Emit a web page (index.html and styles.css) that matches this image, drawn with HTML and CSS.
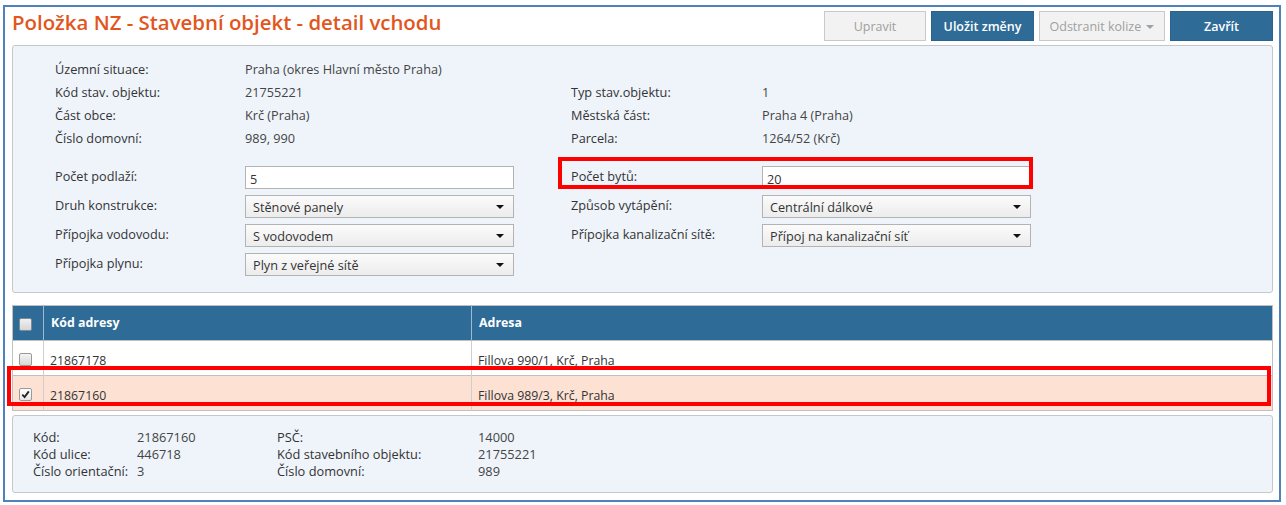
FILE: index.html
```html
<!DOCTYPE html>
<html lang="cs">
<head>
<meta charset="utf-8">
<title>Položka NZ - Stavební objekt - detail vchodu</title>
<link rel="stylesheet" href="styles.css">
</head>
<body>
<div class="frame">
  <div class="topbar">
    <h1 class="title">Položka NZ - Stavební objekt - detail vchodu</h1>
    <div class="actions">
      <button class="btn btn-disabled btn-upravit">Upravit</button>
      <button class="btn btn-primary btn-ulozit">Uložit změny</button>
      <button class="btn btn-disabled btn-kolize">Odstranit kolize <span class="caret"></span></button>
      <button class="btn btn-primary btn-zavrit">Zavřít</button>
    </div>
  </div>

  <div class="panel detail">
    <div class="info">
      <span class="lbl">Územní situace:</span><span class="val">Praha (okres Hlavní město Praha)</span><span></span><span></span>
      <span class="lbl">Kód stav. objektu:</span><span class="val">21755221</span><span class="lbl">Typ stav.objektu:</span><span class="val">1</span>
      <span class="lbl">Část obce:</span><span class="val">Krč (Praha)</span><span class="lbl">Městská část:</span><span class="val">Praha 4 (Praha)</span>
      <span class="lbl">Číslo domovní:</span><span class="val">989, 990</span><span class="lbl">Parcela:</span><span class="val">1264/52 (Krč)</span>
    </div>
    <div class="form">
      <span class="lbl">Počet podlaží:</span><div class="field"><div class="input">5</div></div>
      <span class="lbl">Počet bytů:</span><div class="field"><div class="input">20</div></div>
      <span class="lbl">Druh konstrukce:</span><div class="field"><div class="select">Stěnové panely<span class="arrow"></span></div></div>
      <span class="lbl">Způsob vytápění:</span><div class="field"><div class="select">Centrální dálkové<span class="arrow"></span></div></div>
      <span class="lbl">Přípojka vodovodu:</span><div class="field"><div class="select">S vodovodem<span class="arrow"></span></div></div>
      <span class="lbl">Přípojka kanalizační sítě:</span><div class="field"><div class="select">Přípoj na kanalizační síť<span class="arrow"></span></div></div>
      <span class="lbl">Přípojka plynu:</span><div class="field"><div class="select">Plyn z veřejné sítě<span class="arrow"></span></div></div>
      <span></span><span></span>
    </div>
  </div>

  <table class="grid">
    <colgroup><col class="c-check"><col class="c-kod"><col></colgroup>
    <thead>
      <tr><th><span class="cb cb-head"></span></th><th>Kód adresy</th><th>Adresa</th></tr>
    </thead>
    <tbody>
      <tr><td><span class="cb"></span></td><td>21867178</td><td>Fillova 990/1, Krč, Praha</td></tr>
      <tr class="selected"><td><span class="cb cb-checked"><svg viewBox="0 0 12 12" width="11" height="11"><path d="M2.5 6.2 L5 8.8 L9.6 2.6" fill="none" stroke="#222" stroke-width="2"/></svg></span></td><td>21867160</td><td>Fillova 989/3, Krč, Praha</td></tr>
    </tbody>
  </table>

  <div class="panel summary">
    <span class="lbl">Kód:</span><span class="val">21867160</span><span class="lbl">PSČ:</span><span class="val">14000</span>
    <span class="lbl">Kód ulice:</span><span class="val">446718</span><span class="lbl">Kód stavebního objektu:</span><span class="val">21755221</span>
    <span class="lbl">Číslo orientační:</span><span class="val">3</span><span class="lbl">Číslo domovní:</span><span class="val">989</span>
  </div>

  <div class="mark mark-byty"></div>
  <div class="mark mark-row"></div>
</div>
</body>
</html>
```
FILE: styles.css
```css
* { box-sizing: border-box; }
body { margin: 0; font-family: "Open Sans", sans-serif; font-size: 12.7px; color: #333; }

.frame { position: relative; margin: 5px 5px 0 3px; height: 497px; border: 2px solid #4f81bd; padding: 4px 6px 0 7px; }

.topbar { display: flex; justify-content: space-between; align-items: flex-start; height: 30px; }
.title { margin: 0; font-size: 20.4px; font-weight: 600; line-height: 22px; color: #e2561d; white-space: nowrap; }
.actions { display: flex; gap: 5px; }
.btn { height: 30px; border: 1px solid #c9c9c9; font-family: inherit; font-size: 12.5px; padding: 0; cursor: default; }
.btn-upravit { width: 102px; }
.btn-ulozit { width: 103px; }
.btn-kolize { width: 126px; }
.btn-zavrit { width: 103px; }
.btn-primary { background: #2e6b97; border-color: #2a6290; color: #fff; font-weight: 600; }
.btn-disabled { background: #f2f2f2; color: #a0a0a0; }
.caret { display: inline-block; width: 0; height: 0; border-left: 4px solid transparent; border-right: 4px solid transparent; border-top: 4px solid #a0a0a0; vertical-align: middle; margin-left: 2px; }

.panel { background: #eff4fb; border: 1px solid #c4c8cc; border-radius: 3px; }
.detail { margin-top: 4px; height: 248px; padding: 11px 0 0 42px; }
.info, .form { display: grid; grid-template-columns: 190px 326px 191px 1fr; align-items: center; }
.info { grid-auto-rows: 23px; }
.form { grid-auto-rows: 23px; row-gap: 6px; margin-top: 17px; align-items: start; }
.form .lbl { line-height: 20px; }
.lbl { color: #333; white-space: nowrap; }
.val { color: #444; white-space: nowrap; }
.field { height: 23px; }
.input, .select { width: 269px; height: 23px; border: 1px solid #b3b3b3; display: flex; align-items: center; white-space: nowrap; color: #333; font-size: 12.7px; }
.input { background: #fff; padding: 2px 0 0 4px; }
.select { position: relative; background: linear-gradient(#fbfbfb, #ececec); padding-left: 7px; }
.arrow { position: absolute; right: 9px; top: 9px; width: 0; height: 0; border-left: 4px solid transparent; border-right: 4px solid transparent; border-top: 4px solid #111; }

.grid { width: 100%; margin-top: 12px; border-collapse: collapse; border: 1px solid #c0c0c0; table-layout: fixed; }
.c-check { width: 31px; }
.c-kod { width: 428px; }
.grid th { height: 35px; background: #2e6b97; color: #fff; text-align: left; font-weight: 700; font-size: 12.4px; padding: 0 0 2px 7px; border-left: 1px solid #9fb8cf; }
.grid td { height: 35px; padding: 5px 0 0 6px; border-top: 1px solid #c0c0c0; border-left: 1px solid #cfcfcf; font-size: 12.3px; color: #333; }
.grid th:first-child, .grid td:first-child { border-left: none; padding: 0 0 0 6px; }
.grid tr.selected td { background: #fde1d3; }
.cb { display: inline-block; width: 13px; height: 13px; border: 1px solid #9a9a9a; border-radius: 2px; background: linear-gradient(#f4f4f4, #d8d8d8); vertical-align: middle; position: relative; }
.cb-head { background: linear-gradient(#f0f0f0, #d6d6d6); border-color: #7f8a96; }
.cb-checked { background: linear-gradient(#ffffff, #e6e6e6); }
.cb-checked svg { position: absolute; left: 0; top: 0; }

.summary { margin-top: 4px; height: 78px; padding: 12px 0 0 20px; display: grid; grid-template-columns: 104px 140px 201px 1fr; grid-auto-rows: 17px; align-items: center; font-size: 12.8px; }

.mark { position: absolute; border: 4px solid #ff0000; }
.mark-byty { left: 553px; top: 150px; width: 475px; height: 32px; }
.mark-row { left: 2px; top: 359px; width: 1264px; height: 40px; }
```
